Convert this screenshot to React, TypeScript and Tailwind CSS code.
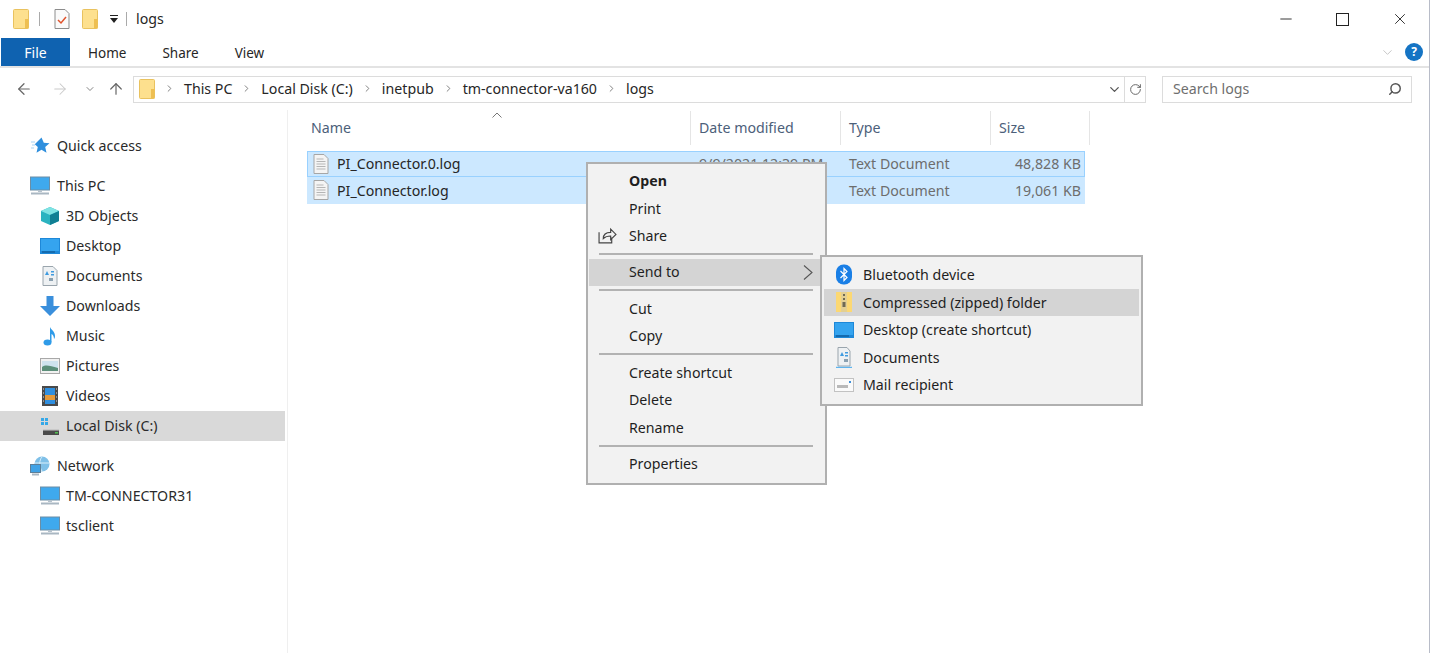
import { ReactNode } from "react";
import { ArrowLeft, ArrowRight, ArrowUp, ChevronDown, ChevronRight, RotateCw, Search, Minus, X } from "lucide-react";

function FolderIcon({ className = "" }: { className?: string }) {
  return (
    <svg viewBox="0 0 16 20" className={className}>
      <rect x="0.5" y="0.5" width="15" height="19" rx="1" fill="#fde08e" stroke="#e9c25f" />
      <rect x="12" y="10" width="3.5" height="9.5" fill="#eebf52" />
    </svg>
  );
}

function TextFileIcon() {
  return (
    <svg viewBox="0 0 16 20" className="h-5 w-4 shrink-0">
      <path d="M1 .5h10l4 4v15H1z" fill="#f4f4f4" stroke="#a6a6a6" />
      <path d="M3.5 5h7M3.5 7.5h9M3.5 10h9M3.5 12.5h9M3.5 15h9" stroke="#b5b5b5" strokeWidth="1.2" />
    </svg>
  );
}

function Monitor() {
  return (
    <svg viewBox="0 0 20 20" className="h-5 w-5">
      <rect x="0.5" y="1" width="19" height="13" fill="#3fa9ee" stroke="#6c8ea6" />
      <path d="M8 14h4v2H8z" fill="#b5c2cc" />
      <path d="M1 17.5h18" stroke="#a9b7c2" strokeWidth="2" />
    </svg>
  );
}

function DesktopIcon() {
  return (
    <svg viewBox="0 0 20 16" className="h-4 w-5">
      <rect width="20" height="16" fill="#1e88d8" />
      <rect x="1" y="1" width="18" height="12" fill="#35a4ef" />
      <rect x="2" y="13.5" width="13" height="1" fill="#0b4f86" />
    </svg>
  );
}

function DocumentsIcon() {
  return (
    <svg viewBox="0 0 16 20" className="h-5 w-4">
      <path d="M1 .5h10l4 4v15H1z" fill="#eef1f3" stroke="#9aa5ad" />
      <path d="M5 5 3 9h4zM9 5h3v1.500H9zM9 8h3v1.500H9z" fill="#3f9be0" />
      <rect x="7" y="12" width="4" height="3" fill="#8aa0b0" />
    </svg>
  );
}

const navIcons: Record<string, ReactNode> = {
  quick: (
    <svg viewBox="0 0 20 20" className="h-5 w-5">
      <path d="M11.500 1.500l2.300 5.300 5.700.5-4.300 3.800 1.300 5.600-5-3-5 3 1.300-5.600-3-2.800z" fill="#2f8fdd" />
      <path d="M1 6h4M2 9h3M1 12h3" stroke="#a9d3f2" strokeWidth="1" />
    </svg>
  ),
  pc: <Monitor />,
  cube: (
    <svg viewBox="0 0 20 20" className="h-5 w-5">
      <path d="M10 1l9 4v10l-9 4-9-4V5z" fill="#2bb3c0" />
      <path d="M1 5l9 4 9-4-9-4z" fill="#7fe3e3" />
      <path d="M10 9l9-4v10l-9 4z" fill="#117f93" />
    </svg>
  ),
  desktop: <DesktopIcon />,
  docs: <DocumentsIcon />,
  down: (
    <svg viewBox="0 0 20 20" className="h-5 w-5">
      <path d="M6.500 0h7v10H20l-10 10L0 10h6.500z" fill="#3a8fdc" />
    </svg>
  ),
  music: (
    <svg viewBox="0 0 20 20" className="h-5 w-5">
      <ellipse cx="7.500" cy="16.500" rx="4" ry="3" fill="#2f9be8" />
      <path d="M10 16V1c1 3 5 4 5 9 0 1.500-.5 2.500-1 3 0-3-1.500-4.500-2.500-5v8z" fill="#2f9be8" />
    </svg>
  ),
  pictures: (
    <svg viewBox="0 0 20 16" className="h-4 w-5">
      <rect x="0.500" y="0.500" width="19" height="15" fill="#f1f1f1" stroke="#a8a8a8" />
      <rect x="2" y="3" width="16" height="10" fill="#cfe3ee" />
      <path d="M2 9c4-3 8-1 16 1v3H2z" fill="#5c8f7a" />
    </svg>
  ),
  videos: (
    <svg viewBox="0 0 16 20" className="h-5 w-4">
      <rect width="16" height="20" fill="#4a4a4a" />
      <rect x="3" y="2" width="10" height="16" fill="#2f8fe0" />
      <path d="M3 9h10v5H3z" fill="#e69a3a" />
      <path d="M1 3h1M1 7h1M1 11h1M1 15h1M14 3h1M14 7h1M14 11h1M14 15h1" stroke="#ddd" />
    </svg>
  ),
  disk: (
    <svg viewBox="0 0 20 20" className="h-5 w-5">
      <path d="M1 2h3v3H1zM5 2h3v3H5zM1 6h3v3H1zM5 6h3v3H5z" fill="#35a8e8" />
      <path d="M3 14h16v5H3z" fill="#4a4a4a" />
      <path d="M3 13h16v1.500H3z" fill="#c9c9c9" />
      <path d="M15 16h3v1.500h-3z" fill="#4fc04f" />
    </svg>
  ),
  network: (
    <svg viewBox="0 0 20 20" className="h-5 w-5">
      <circle cx="12" cy="8" r="7.500" fill="#7fc0e8" />
      <path d="M12 1c-3 3-3 10 0 14M5 7h14" stroke="#d9eefa" fill="none" />
      <rect x="0.500" y="8.500" width="10" height="8" fill="#3fa2e6" stroke="#5d7f98" />
      <path d="M2 18.500h7" stroke="#a9b7c2" strokeWidth="2" />
    </svg>
  ),
};

type NavItem = { label: string; icon: string; indent?: boolean; selected?: boolean };

const navGroups: NavItem[][] = [
  [{ label: "Quick access", icon: "quick" }],
  [
    { label: "This PC", icon: "pc" },
    { label: "3D Objects", icon: "cube", indent: true },
    { label: "Desktop", icon: "desktop", indent: true },
    { label: "Documents", icon: "docs", indent: true },
    { label: "Downloads", icon: "down", indent: true },
    { label: "Music", icon: "music", indent: true },
    { label: "Pictures", icon: "pictures", indent: true },
    { label: "Videos", icon: "videos", indent: true },
    { label: "Local Disk (C:)", icon: "disk", indent: true, selected: true },
  ],
  [
    { label: "Network", icon: "network" },
    { label: "TM-CONNECTOR31", icon: "pc", indent: true },
    { label: "tsclient", icon: "pc", indent: true },
  ],
];

const columns = [
  { label: "Name", width: "w-[388px]" },
  { label: "Date modified", width: "w-[150px]" },
  { label: "Type", width: "w-[150px]" },
  { label: "Size", width: "w-[99px]" },
];

const files = [
  { name: "PI_Connector.0.log", size: "48,828 KB", focused: true },
  { name: "PI_Connector.log", size: "19,061 KB", focused: false },
];

function MenuRow({ label, bold, icon }: { label: string; bold?: boolean; icon?: ReactNode }) {
  return (
    <div className="flex h-[27.5px] items-center">
      <span className="flex w-[40px] justify-center pr-[3px]">{icon}</span>
      <span className={bold ? "font-bold" : ""}>{label}</span>
    </div>
  );
}

function MenuSep() {
  return <div className="my-[3.5px] ml-[10px] mr-[12px] h-[2px] bg-[#b2b2b2]" />;
}

function SubRow({ label, active, children }: { label: string; active?: boolean; children: ReactNode }) {
  return (
    <div className={`flex h-[27.5px] items-center ${active ? "bg-[#d4d4d4]" : ""}`}>
      <span className="flex w-[39px] justify-center pl-[1px]">{children}</span>
      <span>{label}</span>
    </div>
  );
}

export default function App() {
  const crumbs = ["This PC", "Local Disk (C:)", "inetpub", "tm-connector-va160", "logs"];

  return (
    <div className="relative h-[653px] w-[1430px] overflow-hidden border-r border-[#b8bcc8] bg-white font-['Noto_Sans','Open_Sans',sans-serif] text-[14.2px] text-[#262626]">
      {/* title bar */}
      <div className="flex h-[38px] items-center pl-[13px]">
        <FolderIcon className="h-[20px] w-[16px]" />
        <div className="ml-[10px] h-[14px] w-px bg-[#aaa]" />
        <svg viewBox="0 0 16 20" className="ml-[14px] h-[20px] w-[16px]">
          <path d="M1 .5h10l4 4v15H1z" fill="#fafafa" stroke="#8c8c8c" />
          <path d="M4 11l3 3 5-6" stroke="#e0532c" strokeWidth="1.500" fill="none" />
        </svg>
        <FolderIcon className="ml-[12px] h-[20px] w-[16px]" />
        <svg viewBox="0 0 8 8" className="ml-[12px] h-[8px] w-[8px]">
          <path d="M0 0h8v1H0zM0 3h8L4 8z" fill="#222" />
        </svg>
        <div className="ml-[8px] h-[14px] w-px bg-[#aaa]" />
        <span className="ml-[9px]">logs</span>
        <div className="ml-auto flex items-center pr-[20px] text-[#222]">
          <Minus size={18} strokeWidth={1.2} className="mr-[41px]" />
          <div className="mr-[42px] h-[13px] w-[13px] border-[1.5px] border-[#222]" />
          <X size={18} strokeWidth={1.2} />
        </div>
      </div>

      {/* ribbon tabs */}
      <div className="flex h-[30px] items-start border-b-2 border-[#e3e3e3] text-[13.5px]">
        <div className="ml-px flex h-[28px] w-[69px] items-center justify-center bg-[#0f62b0] text-[14px] text-white">File</div>
        <span className="ml-[18px] mt-[5px]">Home</span>
        <span className="ml-[36px] mt-[5px]">Share</span>
        <span className="ml-[36px] mt-[5px]">View</span>
        <ChevronDown size={15} strokeWidth={1.2} className="ml-auto mr-[10px] mt-[7px] text-[#b4b4b4]" />
        <div className="mr-[6px] mt-[5px] flex h-[18px] w-[18px] items-center justify-center rounded-full bg-[#1574c4] text-[12px] font-bold text-white">
          ?
        </div>
      </div>

      {/* address row */}
      <div className="flex h-[42px] items-center">
        <ArrowLeft size={18} strokeWidth={1.6} className="ml-[15px] text-[#666]" />
        <ArrowRight size={18} strokeWidth={1.4} className="ml-[18px] text-[#c9c9c9]" />
        <ChevronDown size={12} strokeWidth={1.8} className="ml-[15px] text-[#777]" />
        <ArrowUp size={18} strokeWidth={1.6} className="ml-[11px] text-[#666]" />
        <div className="ml-[8px] flex h-[27px] w-[1013px] items-center border border-[#dcdcdc] pl-[5px]">
          <FolderIcon className="h-[20px] w-[16px]" />
          {crumbs.map((c) => (
            <span key={c} className="flex items-center">
              <ChevronRight size={11} strokeWidth={2} className="mx-[9px] text-[#777]" />
              <span>{c}</span>
            </span>
          ))}
          <div className="ml-auto flex h-full items-center">
            <ChevronDown size={15} strokeWidth={2} className="mr-[2px] text-[#555]" />
            <div className="flex h-full w-[21px] items-center justify-center border-l border-[#dcdcdc]">
              <RotateCw size={13} strokeWidth={1.8} className="text-[#666]" />
            </div>
          </div>
        </div>
        <div className="ml-[16px] flex h-[27px] w-[250px] items-center justify-between border border-[#dcdcdc] pl-[10px] pr-[9px] text-[#6f6f6f]">
          <span>Search logs</span>
          <Search size={14} strokeWidth={2.5} className="-scale-x-100 text-[#555]" />
        </div>
      </div>

      <div className="flex">
        {/* nav pane */}
        <nav className="h-[543px] w-[288px] shrink-0 border-r border-[#efefef] pr-[2px] pt-[21px]">
          {navGroups.map((group, i) => (
            <div key={i} className="mb-[10px]">
              {group.map((item) => (
                <div
                  key={item.label}
                  className={`flex h-[30px] items-center ${item.indent ? "pl-[40px]" : "pl-[30px]"} ${item.selected ? "bg-[#d9d9d9]" : ""}`}
                >
                  <span className="flex w-[20px] justify-center">{navIcons[item.icon]}</span>
                  <span className={`${item.indent ? "ml-[6px]" : "ml-[7px]"} text-[#2a2a2a]`}>{item.label}</span>
                </div>
              ))}
            </div>
          ))}
        </nav>

        {/* file list */}
        <div className="relative flex-1 pl-[19px]">
          <svg viewBox="0 0 10 6" className="absolute left-[204px] top-[2px] h-[6px] w-[10px]">
            <path d="M.5 5.500 5 1l4.500 4.500" fill="none" stroke="#777" />
          </svg>
          <div className="-ml-[4px] flex h-[35px] items-center text-[#4c607a]">
            {columns.map((col) => (
              <div key={col.label} className={`${col.width} flex h-[34px] items-center border-r border-[#e5e5e5] pl-[8px]`}>
                {col.label}
              </div>
            ))}
          </div>
          <div className="mt-[6px] w-[778px]">
            {files.map((f) => (
              <div
                key={f.name}
                className={`flex items-center border bg-[#cce8ff] ${f.focused ? "h-[26px] border-[#99d1ff]" : "h-[27px] border-[#cce8ff]"}`}
              >
                <div className="flex w-[383px] items-center pl-[5px]">
                  <TextFileIcon />
                  <span className="ml-[8px]">{f.name}</span>
                </div>
                <span className="w-[150px] pl-[8px] text-[#6d6d6d]">9/9/2021 12:39 PM</span>
                <span className="w-[147px] pl-[8px] text-[#6d6d6d]">Text Document</span>
                <span className="flex-1 pr-[3px] text-right text-[#6d6d6d]">{f.size}</span>
              </div>
            ))}
          </div>
        </div>
      </div>

      {/* context menu */}
      <div className="absolute left-[586px] top-[162px] w-[241px] border-2 border-[#b0b0b0] bg-[#f2f2f2] pb-[5px] pl-px pt-[3px] text-[#1f1f1f]">
        <MenuRow label="Open" bold />
        <MenuRow label="Print" />
        <MenuRow
          label="Share"
          icon={
            <svg viewBox="0 0 18 16" className="h-[17px] w-[19px]">
              <path d="M1 5v10h12V10M5 11c0-4 3-6 7-6V2l5 5-5 5V8.500c-3 0-5 .5-7 2.500z" fill="none" stroke="#444" strokeWidth="1.100" />
            </svg>
          }
        />
        <MenuSep />
        <div className="flex h-[27px] items-center bg-[#d4d4d4]">
          <span className="w-[40px]" />
          <span>Send to</span>
          <svg viewBox="0 0 10 15" className="ml-auto mr-[12px] h-[15px] w-[10px]">
            <path d="M1 .5 9 7.500 1 14.500" fill="none" stroke="#555" strokeWidth="1.100" />
          </svg>
        </div>
        <MenuSep />
        <MenuRow label="Cut" />
        <MenuRow label="Copy" />
        <MenuSep />
        <MenuRow label="Create shortcut" />
        <MenuRow label="Delete" />
        <MenuRow label="Rename" />
        <MenuSep />
        <MenuRow label="Properties" />
      </div>

      {/* send to submenu */}
      <div className="absolute left-[820px] top-[255px] w-[323px] border-2 border-[#b0b0b0] bg-[#f2f2f2] px-[2px] pb-[5px] pt-[4px] text-[#1f1f1f]">
        <SubRow label="Bluetooth device">
          <svg viewBox="0 0 16 20" className="h-[21px] w-[16px]">
            <rect width="16" height="20" rx="7.500" fill="#1a7fe6" />
            <path d="M4.500 6.500 11 13l-3 3V4l3 3-6.500 6.500" fill="none" stroke="#fff" strokeWidth="1.200" />
          </svg>
        </SubRow>
        <SubRow label="Compressed (zipped) folder" active>
          <svg viewBox="0 0 16 20" className="h-[20px] w-[16px]">
            <rect width="16" height="20" fill="#fcd873" />
            <path d="M5 0h6v20H5z" fill="#e3cf92" />
            <path d="M7 2h2v2H7zM7 6h2v2H7zM6.500 10h3v5h-3z" fill="#6f6a55" />
          </svg>
        </SubRow>
        <SubRow label="Desktop (create shortcut)">
          <DesktopIcon />
        </SubRow>
        <SubRow label="Documents">
          <svg viewBox="0 0 18 21" className="h-[21px] w-[18px]">
            <path d="M3 .5h9l3 3.500v15H3z" fill="#eef1f3" stroke="#9aa5ad" />
            <path d="M7 5 5 9h4zM10 5h3v1.500h-3zM10 8h3v1.500h-3z" fill="#3f9be0" />
            <rect x="9" y="12" width="4" height="3" fill="#8aa0b0" />
            <path d="M1 20.500h16" stroke="#5fb4ee" strokeWidth="1.500" />
          </svg>
        </SubRow>
        <SubRow label="Mail recipient">
          <svg viewBox="0 0 20 14" className="h-[14px] w-[20px]">
            <rect x="0.500" y="0.500" width="19" height="13" fill="#fafafa" stroke="#c2c2c2" />
            <path d="M3 7h11v3H3z" fill="#b9b9b9" />
            <path d="M15 3h2v2h-2z" fill="#3f8fd8" />
          </svg>
        </SubRow>
      </div>
    </div>
  );
}
